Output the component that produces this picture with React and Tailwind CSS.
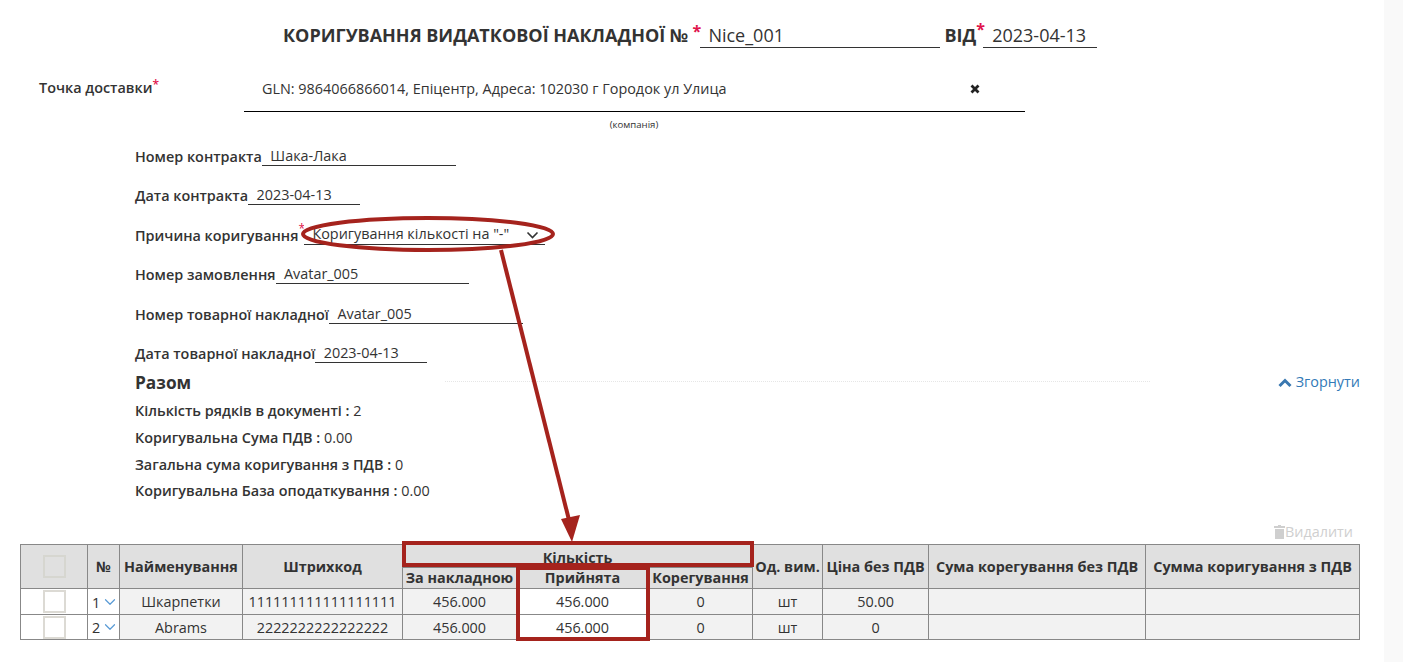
import React from 'react';
import { ChevronDown } from 'lucide-react';

const Field = ({ label, value, width }) => (
  <div className="flex items-end h-[21px] pl-[135px]">
    <span className="font-semibold leading-[18px]">{label}</span>
    <div className={`${width} border-b border-[#333] h-[21px] leading-[22px] pl-[8.5px]`}>{value}</div>
  </div>
);

const rows = [
  { n: 1, name: 'Шкарпетки', code: '111111111111111111', price: '50.00', h: 'h-[26px]', pad: 'pt-0' },
  { n: 2, name: 'Abrams', code: '2222222222222222', price: '0', h: 'h-[24px]', pad: 'pt-[2px]' },
];

const th = 'border border-[#888] bg-[#e0e0e0] font-bold text-center p-0 leading-none';
const td = 'border border-[#888] bg-[#f2f2f2] text-center px-0 pb-0';

const Check = ({ light }) => (
  <div className={`w-[23px] h-[23px] mx-auto border-2 ${light ? 'border-[#d6d6d0]' : 'border-[#dcdad4] bg-white'}`} />
);

const App = () => {
  return (
    <div className="relative flex h-[662px] overflow-hidden bg-white text-[#333] text-[14.4px] font-['Open_Sans',sans-serif]">
      <div className="w-[1384px] shrink-0">
        <div className="flex items-end h-[48px] pl-[283px]">
          <h1 className="font-bold text-[18px] leading-6 pb-[1px] whitespace-nowrap">КОРИГУВАННЯ ВИДАТКОВОЇ НАКЛАДНОЇ №</h1>
          <span className="text-[16px] ml-[4px] w-[8px] self-start mt-[23px] text-[#e0144c] font-bold leading-none">*</span>
          <div className="w-[240px] border-b border-[#333] text-[18px] leading-[26px] h-[26px] pl-[8px]">Nice_001</div>
          <span className="font-bold text-[18px] leading-6 pb-[1px] ml-[4px]">ВІД</span>
          <span className="text-[16px] w-[7px] self-start mt-[21px] text-[#e0144c] font-bold leading-none">*</span>
          <div className="w-[114px] border-b border-[#333] text-[18px] leading-[26px] h-[26px] pl-[9px]">2023-04-13</div>
        </div>

        <div className="flex mt-[29px] pl-[39px]">
          <div className="w-[205px] font-semibold leading-[22px]">
            Точка доставки<span className="text-[#e0144c] text-xs relative top-[-4px]">*</span>
          </div>
          <div className="w-[781px] h-[35px] border-b border-black flex pl-[18px] pr-[45px] justify-between">
            <span className="leading-[24px]">GLN: 9864066866014, Епіцентр, Адреса: 102030 г Городок ул Улица</span>
            <svg width="10" height="10" viewBox="0 0 10 10" className="mt-[7px]">
              <path d="M1.5 1.5L8.5 8.5M8.5 1.5L1.5 8.5" stroke="#222" strokeWidth="2.8" />
            </svg>
          </div>
        </div>
        <div className="text-[9.6px] leading-3 text-center w-[1268px] mt-[7px]">(компанія)</div>

        <div className="flex flex-col gap-[18.4px] mt-[14px]">
          <Field label="Номер контракта" value="Шака-Лака" width="w-[194px]" />
          <Field label="Дата контракта" value="2023-04-13" width="w-[112px]" />
          <div className="flex items-end h-[21px] pl-[135px]">
            <span className="font-semibold leading-[18px]">Причина коригування</span>
            <span className="text-[#e0144c] text-xs w-[6px] self-start mt-[-3px]">*</span>
            <div className="relative">
              <select className="appearance-none block w-[241px] h-[21px] border-0 border-b border-[#333] outline-none leading-5 pl-[8px] bg-white">
                <option>Коригування кількості на "-"</option>
              </select>
              <svg width="13" height="8" viewBox="0 0 13 8" className="absolute right-[6px] top-[7px] pointer-events-none">
                <path d="M1.5 1.5L6.5 6.5L11.5 1.5" fill="none" stroke="#333" strokeWidth="1.6" />
              </svg>
            </div>
          </div>
          <Field label="Номер замовлення" value="Avatar_005" width="w-[193px]" />
          <Field label="Номер товарної накладної" value="Avatar_005" width="w-[194px]" />
          <Field label="Дата товарної накладної" value="2023-04-13" width="w-[112px]" />
        </div>

        <div className="flex items-center h-[26px] mt-[7px] pl-[135px] pr-[24px]">
          <h2 className="font-bold text-[17.3px] w-[310px] leading-6">Разом</h2>
          <div className="w-[705px] border-t border-dotted border-[#e6e6e6] mt-[-3px]" />
          <div className="ml-auto flex items-center gap-[4px] text-[#337ab7]">
            <svg width="14" height="10" viewBox="0 0 14 10">
              <path d="M1.5 8L7 2.5L12.5 8" fill="none" stroke="#3a78b0" strokeWidth="3" />
            </svg>
            <span className="leading-5 mt-[-2px]">Згорнути</span>
          </div>
        </div>

        <div className="pl-[135px] mt-[5px] leading-5">
          <div className="h-[27px]"><b className="font-semibold">Кількість рядків в документі :</b> 2</div>
          <div className="h-[27px]"><b className="font-semibold">Коригувальна Сума ПДВ :</b> 0.00</div>
          <div className="h-[26px]"><b className="font-semibold">Загальна сума коригування з ПДВ :</b> 0</div>
          <div className="h-[27px]"><b className="font-semibold">Коригувальна База оподаткування :</b> 0.00</div>
        </div>

        <div className="flex justify-end items-center pr-[31px] h-[20px] mt-[14.5px] text-[#cfcfcf]">
          <svg width="11" height="14" viewBox="0 0 11 14" fill="currentColor">
            <path d="M4 0h3v1h4v2H0V1h4zM1 4h9v10H1z" />
          </svg>
          <span className="leading-5">Видалити</span>
        </div>

        <div className="pl-[20px] mt-[2px]">
          <table className="w-[1339px] table-fixed border-collapse">
            <colgroup>
              <col className="w-[67px]" />
              <col className="w-[32px]" />
              <col className="w-[123px]" />
              <col className="w-[160px]" />
              <col className="w-[114px]" />
              <col className="w-[132px]" />
              <col className="w-[104px]" />
              <col className="w-[70px]" />
              <col className="w-[106px]" />
              <col className="w-[217px]" />
              <col className="w-[214px]" />
            </colgroup>
            <thead>
              <tr className="h-[23px]">
                <th rowSpan={2} className={th}><Check light /></th>
                <th rowSpan={2} className={th}>№</th>
                <th rowSpan={2} className={th}>Найменування</th>
                <th rowSpan={2} className={th}>Штрихкод</th>
                <th colSpan={3} className={`${th} pt-[3px]`}>Кількість</th>
                <th rowSpan={2} className={`${th} whitespace-nowrap`}>Од. вим.</th>
                <th rowSpan={2} className={`${th} whitespace-nowrap`}>Ціна без ПДВ</th>
                <th rowSpan={2} className={`${th} whitespace-nowrap`}>Сума корегування без ПДВ</th>
                <th rowSpan={2} className={`${th} whitespace-nowrap`}>Сумма коригування з ПДВ</th>
              </tr>
              <tr className="h-[21px]">
                <th className={`${th} whitespace-nowrap`}>За накладною</th>
                <th className={th}>Прийнята</th>
                <th className={`${th} whitespace-nowrap`}>Корегування</th>
              </tr>
            </thead>
            <tbody>
              {rows.map((r) => (
                <tr key={r.n} className={r.h}>
                  <td className={`${td} pt-0 bg-white`}><Check /></td>
                  <td className={`${td} pt-0 bg-white text-left pl-[4px]`}>
                    <div className="flex items-center">
                      <span className="w-[12px] mt-[2px]">{r.n}</span>
                      <ChevronDown size={18} strokeWidth={1.6} className="text-[#5a9bd5] ml-[-3px]" />
                    </div>
                  </td>
                  <td className={`${td} ${r.pad}`}>{r.name}</td>
                  <td className={`${td} ${r.pad}`}>{r.code}</td>
                  <td className={`${td} ${r.pad}`}>456.000</td>
                  <td className={`${td} ${r.pad} bg-white`}>456.000</td>
                  <td className={`${td} ${r.pad}`}>0</td>
                  <td className={`${td} ${r.pad}`}>шт</td>
                  <td className={`${td} ${r.pad}`}>{r.price}</td>
                  <td className={td}></td>
                  <td className={td}></td>
                </tr>
              ))}
            </tbody>
          </table>
        </div>
      </div>
      <div className="flex-1 bg-[#f9f9f9]" />

      {/* annotations drawn over the page */}
      <svg className="absolute left-0 top-0 pointer-events-none" width="1403" height="662">
        <ellipse cx="428" cy="234" rx="125" ry="16" fill="none" stroke="#a5231d" strokeWidth="4" />
        <line x1="501" y1="250" x2="569" y2="520" stroke="#a5231d" strokeWidth="4" />
        <polygon points="561,519 580,515 572,542" fill="#a5231d" />
      </svg>
      <div className="absolute left-[402px] top-[541px] w-[352px] h-[26px] border-4 border-[#a5231d]" />
      <div className="absolute left-[516px] top-[566px] w-[134px] h-[75px] border-4 border-[#a5231d]" />
    </div>
  );
};

export default App;
